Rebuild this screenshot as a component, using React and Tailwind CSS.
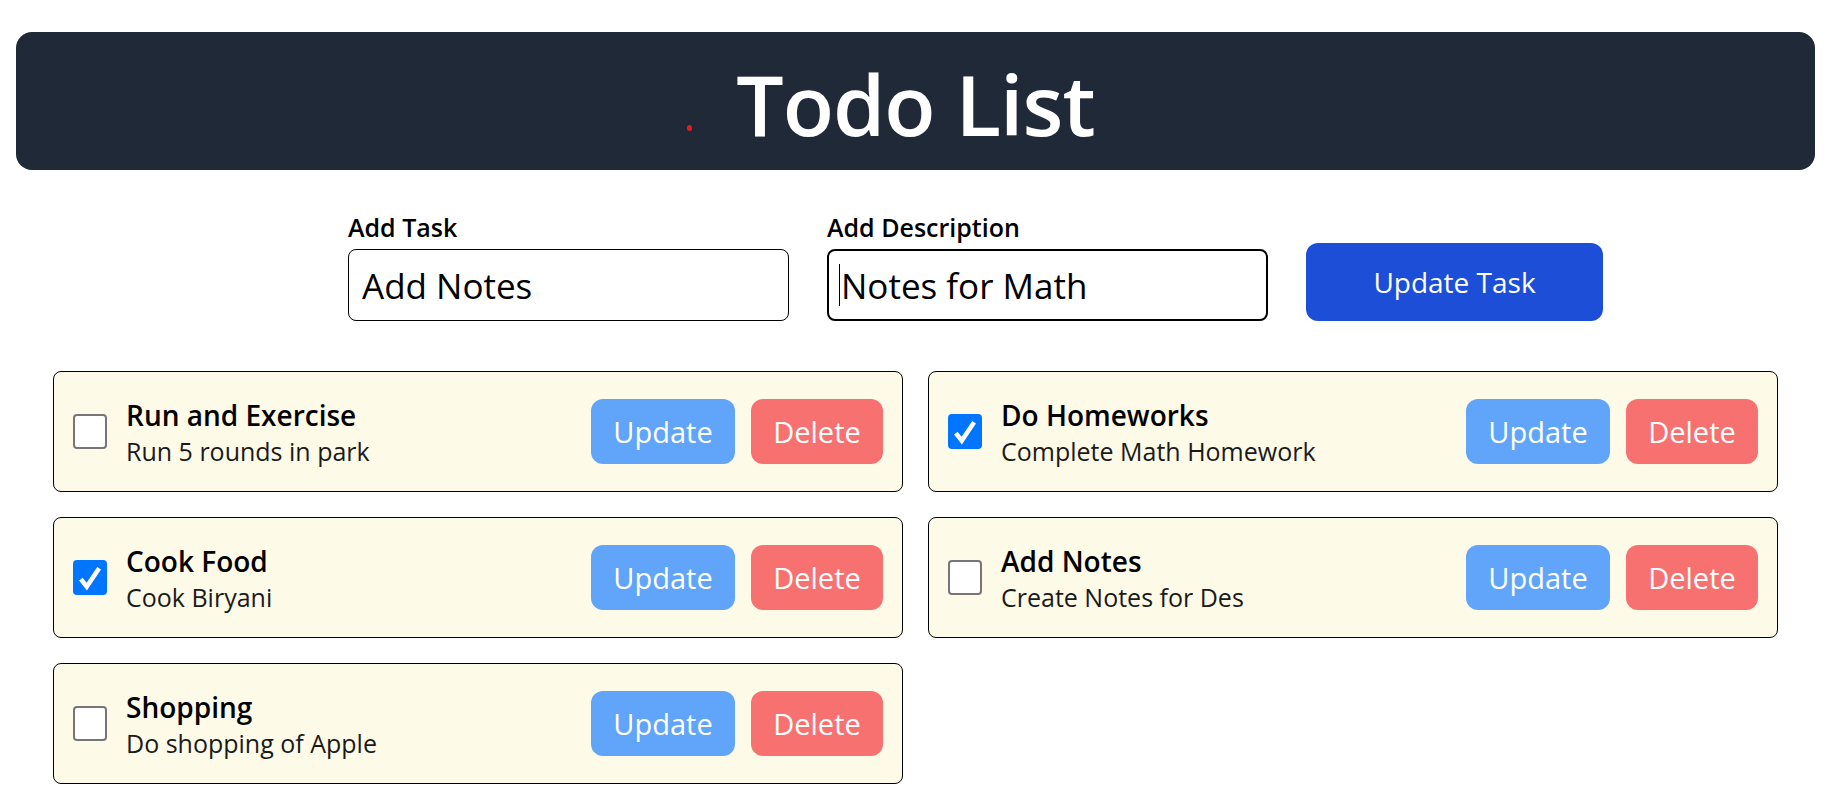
import React from "react";

const tasks = [
  { title: "Run and Exercise", desc: "Run 5 rounds in park", done: false },
  { title: "Do Homeworks", desc: "Complete Math Homework", done: true },
  { title: "Cook Food", desc: "Cook Biryani", done: true },
  { title: "Add Notes", desc: "Create Notes for Des", done: false },
  { title: "Shopping", desc: "Do shopping of Apple", done: false },
];

function Check({ done }) {
  if (done) {
    return (
      <div className="w-[34px] h-[35px] shrink-0 rounded-[4px] bg-[#0075ff] flex items-center justify-center">
        <svg width="26" height="28" viewBox="0 0 24 26" fill="none">
          <path d="M3.5 14 L9 21 L20.5 4" stroke="white" strokeWidth="4.2" strokeLinecap="butt" strokeLinejoin="miter" />
        </svg>
      </div>
    );
  }
  return <div className="w-[34px] h-[35px] shrink-0 rounded-[4px] bg-white border-2 border-[#767676]" />;
}

function Card({ t }) {
  return (
    <div className="h-[121px] flex items-center border border-black rounded-lg bg-[#fefae8] pl-[19px] pr-[19px]">
      <Check done={t.done} />
      <div className="ml-[19px] flex-1 flex flex-col">
        <div className="text-[28px] leading-[36px] font-semibold text-black">{t.title}</div>
        <div className="text-[25px] leading-[32px] text-[#1a1a1a] mt-[2px]">{t.desc}</div>
      </div>
      <div className="flex gap-4">
        <button className="w-[144px] h-[65px] rounded-xl bg-[#60a5fa] text-white text-[29px]">Update</button>
        <button className="w-[132px] h-[65px] rounded-xl bg-[#f87171] text-white text-[29px]">Delete</button>
      </div>
    </div>
  );
}

export default function App() {
  return (
    <div className="min-h-screen bg-white pt-8 pb-8 font-['Open_Sans',sans-serif] text-black">
      <header className="ml-4 mr-6 h-[138px] rounded-2xl bg-[#1f2937] flex items-center justify-center">
        <div className="relative mt-[6px]">
          <span className="absolute left-[-49px] top-[63px] w-[5px] h-[6px] rounded-full bg-[#e11d1d]" />
          <h1 className="text-[84px] leading-none font-semibold text-white tracking-[-1px]">Todo List</h1>
        </div>
      </header>

      <div className="mt-[42px] ml-[348px] flex items-end gap-[38px]">
        <div className="flex flex-col">
          <label className="text-[25px] leading-[30px] font-semibold mb-[7px]">Add Task</label>
          <input
            readOnly
            defaultValue="Add Notes"
            className="w-[441px] h-[72px] border border-black rounded-lg px-[13px] text-[35px] bg-white outline-none"
          />
        </div>
        <div className="flex flex-col">
          <label className="text-[25px] leading-[30px] font-semibold mb-[7px]">Add Description</label>
          <div className="relative">
            <input
              readOnly
              defaultValue="Notes for Math"
              className="w-[441px] h-[72px] border-2 border-black rounded-lg px-[12px] text-[35px] bg-white outline-none"
            />
            <span className="absolute left-[12px] top-[15px] w-[1px] h-[42px] bg-black" />
          </div>
        </div>
        <button className="w-[297px] h-[78px] rounded-xl bg-[#1d4ed8] text-white text-[28px]">Update Task</button>
      </div>

      <div className="mt-[50px] ml-[53px] mr-[61px] grid grid-cols-2 gap-[25px]">
        {tasks.map((t, i) => (
          <Card key={i} t={t} />
        ))}
      </div>
    </div>
  );
}
